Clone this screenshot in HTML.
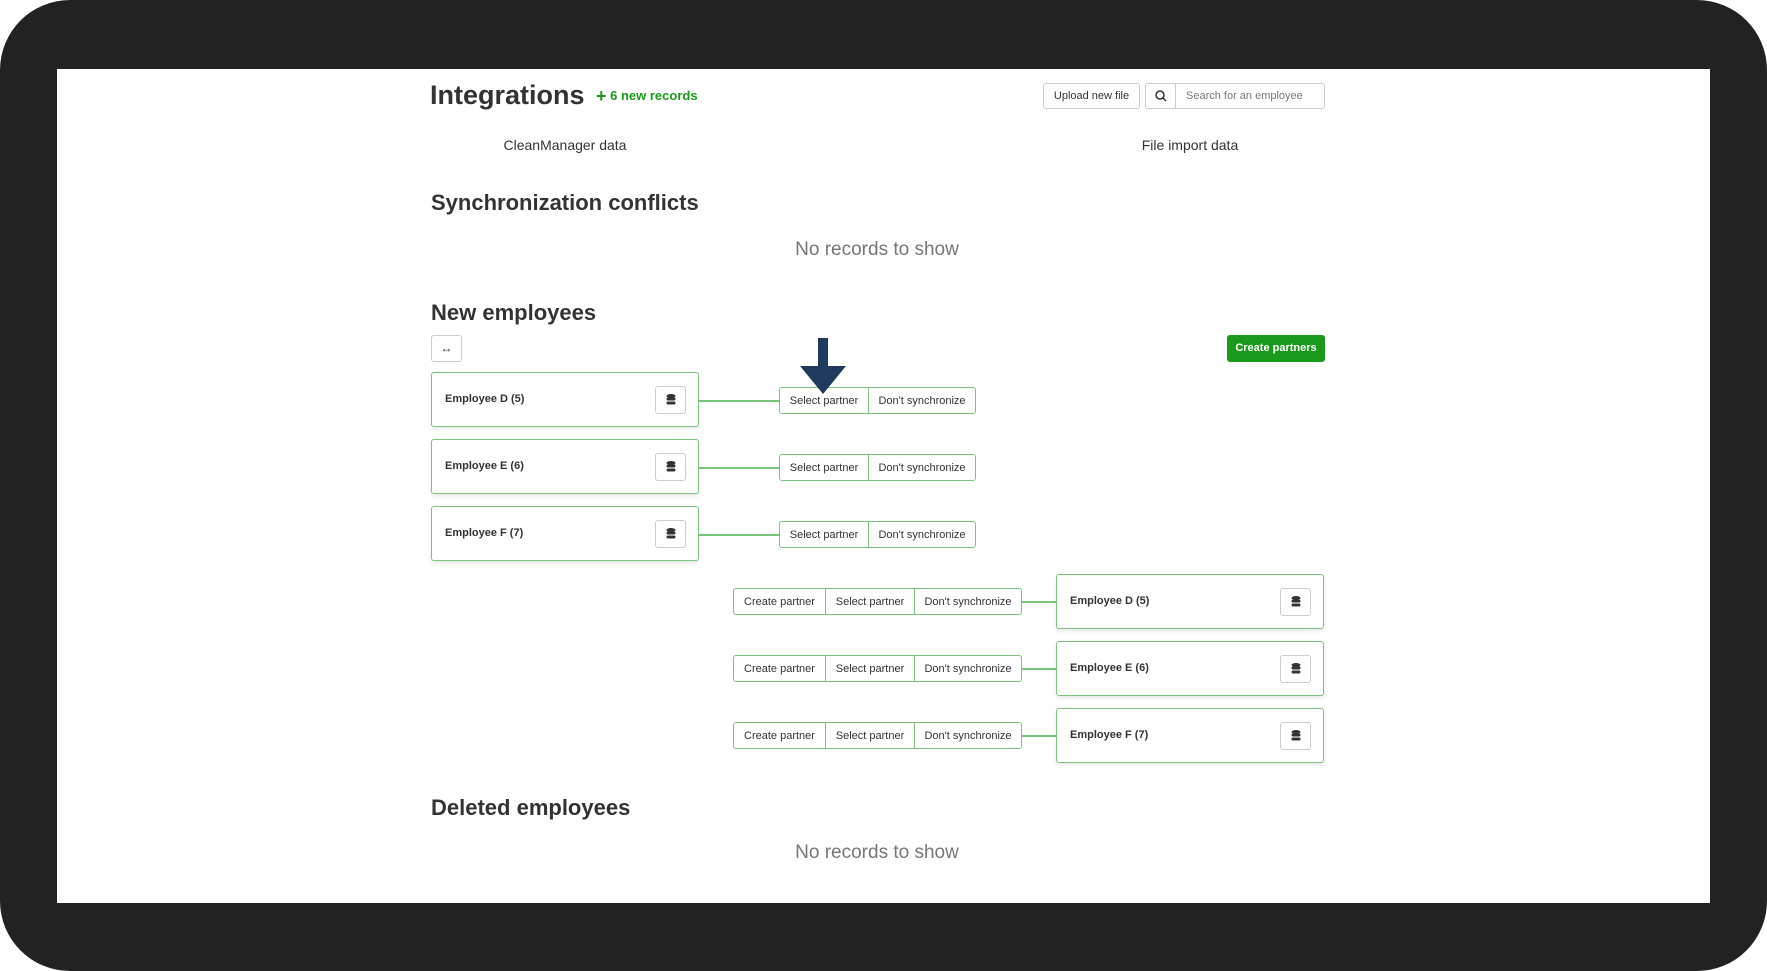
<!DOCTYPE html>
<html><head><style>
*{box-sizing:border-box;margin:0;padding:0}
body{width:1767px;height:971px;background:#fff;position:relative;overflow:hidden;font-family:"Liberation Sans",Arial,sans-serif;color:#333}
.frame{position:absolute;left:0;top:0;width:1767px;height:971px;background:#222;border-radius:70px}
.screen{position:absolute;left:57px;top:69px;width:1653px;height:834px;background:#fff}
.a{position:absolute}
.h2{font-weight:bold;font-size:22px;color:#333}
.none{font-size:19px;color:#777;width:300px;text-align:center}
.card{position:absolute;width:268px;height:55px;border:1.5px solid #7cc47c;border-radius:3px;background:#fff;box-shadow:0 2px 4px rgba(0,0,0,.1)}
.card .t{position:absolute;left:13px;top:20px;font-size:11px;font-weight:bold;color:#333}
.card .ib{position:absolute;right:12px;top:13px;width:31px;height:28px;border:1px solid #ccc;border-radius:3px;background:#fff}
.card .ib svg{position:absolute;left:10px;top:7px}
.grp{position:absolute;height:27px;border:1.5px solid #7cc47c;border-radius:3px;background:#fff;display:flex}
.grp span{font-size:11px;color:#333;display:flex;align-items:center;justify-content:center;border-right:1px solid #7cc47c;height:100%}
.grp span:last-child{border-right:none}
.line{position:absolute;height:1.5px;background:#7cc47c}
</style></head><body>
<div class="frame"></div>
<div class="screen"></div>
<div class="a" style="left:430px;top:80px;font-size:27px;font-weight:bold;color:#333">Integrations</div>
<div class="a" style="left:596px;top:86px;font-size:13px;font-weight:bold;color:#1a9a1a"><span style="font-size:18px;vertical-align:-2px">+</span> 6 new records</div>
<div class="a" style="left:1043px;top:83px;width:97px;height:26px;border:1px solid #ccc;border-radius:3px;font-size:11px;text-align:center;line-height:24px;color:#333">Upload new file</div>
<div class="a" style="left:1145px;top:83px;width:180px;height:26px;border:1px solid #ccc;border-radius:3px">
<div class="a" style="left:0;top:0;width:30px;height:24px;border-right:1px solid #ccc"><svg width="30" height="24"><circle cx="14" cy="11" r="4" fill="none" stroke="#333" stroke-width="1.5"/><line x1="17" y1="14" x2="20" y2="17" stroke="#333" stroke-width="1.5"/></svg></div>
<div class="a" style="left:40px;top:6px;font-size:11px;color:#777">Search for an employee</div></div>
<div class="a" style="left:465px;top:137px;width:200px;text-align:center;font-size:14px">CleanManager data</div>
<div class="a" style="left:1090px;top:137px;width:200px;text-align:center;font-size:14px">File import data</div>
<div class="a h2" style="left:431px;top:190px">Synchronization conflicts</div>
<div class="a none" style="left:727px;top:239px">No records to show</div>
<div class="a h2" style="left:431px;top:300px">New employees</div>
<div class="a" style="left:431px;top:335px;width:31px;height:27px;border:1px solid #ccc;border-radius:3px;text-align:center;font-size:12px;line-height:24px">↔</div>
<div class="a" style="left:1227px;top:335px;width:98px;height:27px;background:#1a9a1a;border-radius:3px;color:#fff;font-size:11px;font-weight:bold;text-align:center;line-height:27px">Create partners</div>

<div class="card" style="left:431px;top:372px"><div class="t">Employee D (5)</div><div class="ib"><svg width="10" height="11"><ellipse cx="5" cy="2" rx="4.5" ry="2" fill="#333"/><rect x=".5" y="3.5" width="9" height="3" rx="1.5" fill="#333"/><rect x=".5" y="7.5" width="9" height="3" rx="1.5" fill="#333"/></svg></div></div>
<div class="line" style="left:699px;top:400px;width:80px"></div>
<div class="grp" style="left:779px;top:387px;width:197px"><span style="width:89px">Select partner</span><span style="flex:1">Don't synchronize</span></div>

<div class="card" style="left:431px;top:439px"><div class="t">Employee E (6)</div><div class="ib"><svg width="10" height="11"><ellipse cx="5" cy="2" rx="4.5" ry="2" fill="#333"/><rect x=".5" y="3.5" width="9" height="3" rx="1.5" fill="#333"/><rect x=".5" y="7.5" width="9" height="3" rx="1.5" fill="#333"/></svg></div></div>
<div class="line" style="left:699px;top:467px;width:80px"></div>
<div class="grp" style="left:779px;top:454px;width:197px"><span style="width:89px">Select partner</span><span style="flex:1">Don't synchronize</span></div>

<div class="card" style="left:431px;top:506px"><div class="t">Employee F (7)</div><div class="ib"><svg width="10" height="11"><ellipse cx="5" cy="2" rx="4.5" ry="2" fill="#333"/><rect x=".5" y="3.5" width="9" height="3" rx="1.5" fill="#333"/><rect x=".5" y="7.5" width="9" height="3" rx="1.5" fill="#333"/></svg></div></div>
<div class="line" style="left:699px;top:534px;width:80px"></div>
<div class="grp" style="left:779px;top:521px;width:197px"><span style="width:89px">Select partner</span><span style="flex:1">Don't synchronize</span></div>

<div class="grp" style="left:733px;top:588px;width:289px"><span style="width:92px">Create partner</span><span style="width:89px">Select partner</span><span style="flex:1">Don't synchronize</span></div>
<div class="line" style="left:1022px;top:601px;width:34px"></div>
<div class="card" style="left:1056px;top:574px"><div class="t">Employee D (5)</div><div class="ib"><svg width="10" height="11"><ellipse cx="5" cy="2" rx="4.5" ry="2" fill="#333"/><rect x=".5" y="3.5" width="9" height="3" rx="1.5" fill="#333"/><rect x=".5" y="7.5" width="9" height="3" rx="1.5" fill="#333"/></svg></div></div>

<div class="grp" style="left:733px;top:655px;width:289px"><span style="width:92px">Create partner</span><span style="width:89px">Select partner</span><span style="flex:1">Don't synchronize</span></div>
<div class="line" style="left:1022px;top:668px;width:34px"></div>
<div class="card" style="left:1056px;top:641px"><div class="t">Employee E (6)</div><div class="ib"><svg width="10" height="11"><ellipse cx="5" cy="2" rx="4.5" ry="2" fill="#333"/><rect x=".5" y="3.5" width="9" height="3" rx="1.5" fill="#333"/><rect x=".5" y="7.5" width="9" height="3" rx="1.5" fill="#333"/></svg></div></div>

<div class="grp" style="left:733px;top:722px;width:289px"><span style="width:92px">Create partner</span><span style="width:89px">Select partner</span><span style="flex:1">Don't synchronize</span></div>
<div class="line" style="left:1022px;top:735px;width:34px"></div>
<div class="card" style="left:1056px;top:708px"><div class="t">Employee F (7)</div><div class="ib"><svg width="10" height="11"><ellipse cx="5" cy="2" rx="4.5" ry="2" fill="#333"/><rect x=".5" y="3.5" width="9" height="3" rx="1.5" fill="#333"/><rect x=".5" y="7.5" width="9" height="3" rx="1.5" fill="#333"/></svg></div></div>

<svg class="a" style="left:796px;top:337px" width="54" height="60"><polygon points="22,1 32,1 32,29 50,29 27,57 4,29 22,29" fill="#1f3a5f"/></svg>

<div class="a h2" style="left:431px;top:795px">Deleted employees</div>
<div class="a none" style="left:727px;top:842px">No records to show</div>
</body></html>
